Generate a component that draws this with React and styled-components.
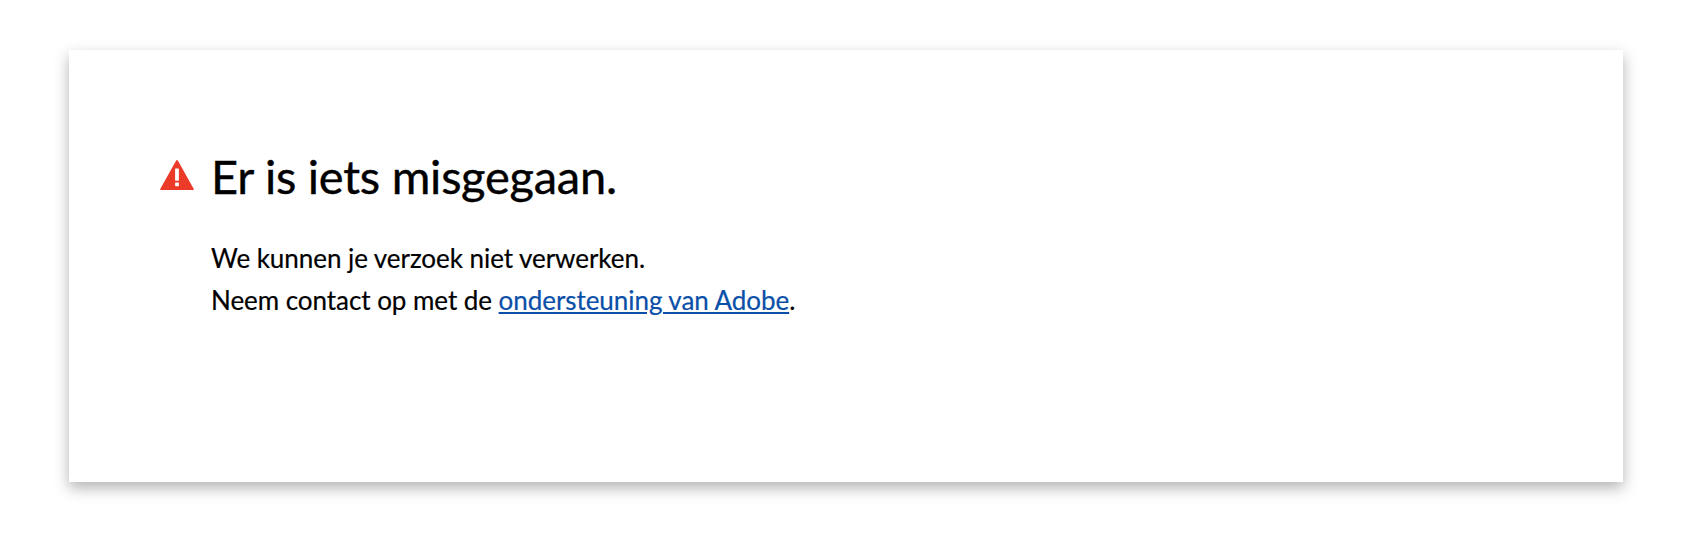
import React from 'react';
import styled, { createGlobalStyle } from 'styled-components';

const GlobalStyle = createGlobalStyle`
  html, body {
    margin: 0;
    background: #fff;
    font-family: "Lato", "Open Sans", "Liberation Sans", sans-serif;
    color: #000;
  }
`;

const Page = styled.main`
  padding: 50px 59px 64px 69px;
`;

const Card = styled.section`
  box-sizing: border-box;
  height: 432px;
  padding: 96px 91px 0;
  background: #fff;
  box-shadow: 0 6px 14px rgba(0, 0, 0, 0.3);
`;

const Heading = styled.div`
  display: flex;
  align-items: center;
  gap: 17px;
`;

const AlertIcon = styled.svg`
  flex: none;
  width: 34px;
  height: 34px;
  margin-bottom: 2px;
  fill: #ec3a29;
`;

const Title = styled.h1`
  margin: 0;
  font-size: 47px;
  line-height: 60px;
  letter-spacing: -0.25px;
  font-weight: 400;
  -webkit-text-stroke: 0.4px #000;
`;

const Body = styled.div`
  margin: 31px 0 0 51px;
  font-size: 26px;
  line-height: 42px;
  letter-spacing: -0.05px;
  -webkit-text-stroke: 0.2px currentColor;
`;

const SupportLink = styled.a`
  color: #0a4fa8;
  text-decoration: underline;
`;

export default function App() {
  return (
    <Page>
      <GlobalStyle />
      <Card>
        <Heading>
          <AlertIcon viewBox="0 0 18 18">
            <path d="M8.5635,1.2895.2,16.256A.5.5,0,0,0,.636,17H17.364a.5.5,0,0,0,.436-.744L9.4365,1.2895a.5.5,0,0,0-.873,0ZM10,14.75a.25.25,0,0,1-.25.25H8.25A.25.25,0,0,1,8,14.75v-1.5A.25.25,0,0,1,8.25,13h1.5a.25.25,0,0,1,.25.25Zm0-3a.25.25,0,0,1-.25.25H8.25A.25.25,0,0,1,8,11.75v-6a.25.25,0,0,1,.25-.25h1.5a.25.25,0,0,1,.25.25Z" />
          </AlertIcon>
          <Title>Er is iets misgegaan.</Title>
        </Heading>
        <Body>
          <div>We kunnen je verzoek niet verwerken.</div>
          <div>
            Neem contact op met de <SupportLink href="#">ondersteuning van Adobe</SupportLink>.
          </div>
        </Body>
      </Card>
    </Page>
  );
}
